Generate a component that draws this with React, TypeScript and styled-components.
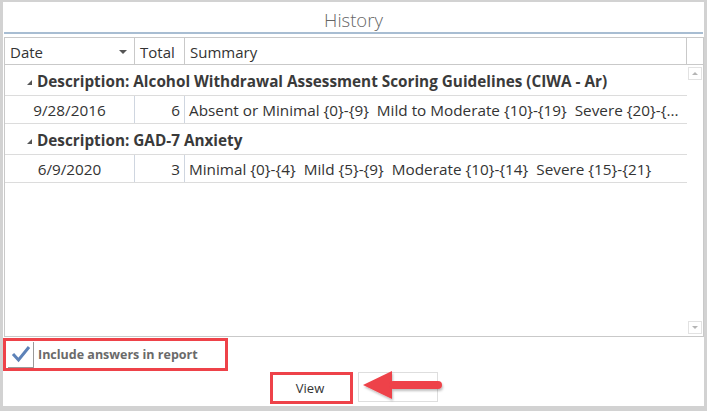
import React from 'react'
import styled, { createGlobalStyle } from 'styled-components'

const colors = {
  frame: '#d2d2d2',
  text: '#333333',
  muted: '#666666',
  line: '#dcdcdc',
  gridBorder: '#c9c9c9',
  cellDivider: '#cfd6e0',
  titleLine: '#a8bdd2',
  red: '#ee4249',
}

const GlobalStyle = createGlobalStyle`
  html, body {
    margin: 0;
    padding: 0;
    background: #ffffff;
  }
  body {
    width: 707px;
    height: 411px;
    overflow: hidden;
    font-family: "Open Sans", "Noto Sans", sans-serif;
    color: ${colors.text};
  }
  * { box-sizing: border-box; }
`

const Window = styled.div`
  width: 707px;
  height: 411px;
  border: 3px solid ${colors.frame};
  border-top-width: 2px;
  border-bottom-width: 5px;
  border-right-width: 3px;
  background: #fff;
  display: flex;
  flex-direction: column;
  padding: 0 0 0 1px;
`

const Title = styled.div`
  height: 32px;
  margin-right: 1px;
  border-bottom: 2px solid ${colors.titleLine};
  text-align: center;
  font-size: 18.5px;
  font-weight: 300;
  color: ${colors.muted};
  line-height: 36px;
`

const Grid = styled.div`
  margin-top: 3px;
  height: 300px;
  border: 1px solid ${colors.gridBorder};
  display: flex;
  flex-direction: column;
`

const HeaderRow = styled.div`
  display: grid;
  grid-template-columns: 130px 50px 1fr 16px;
  height: 27px;
  border-bottom: 1px solid ${colors.gridBorder};
`

const HeaderCell = styled.div<{ $last?: boolean }>`
  display: flex;
  align-items: center;
  justify-content: space-between;
  padding: 2px 5px 0 5px;
  font-size: 15px;
  color: ${colors.text};
  border-right: ${(p) => (p.$last ? 'none' : `1px solid ${colors.gridBorder}`)};
`

const SortArrow = styled.span`
  width: 0;
  height: 0;
  border-left: 4px solid transparent;
  border-right: 4px solid transparent;
  border-top: 4px solid #555;
  margin-right: 2px;
`

const Body = styled.div`
  flex: 1;
  display: flex;
`

const Rows = styled.div`
  flex: 1;
`

const GroupRow = styled.div`
  height: 31px;
  display: flex;
  align-items: center;
  padding: 1px 0 0 22px;
  gap: 5px;
  border-bottom: 1px solid ${colors.line};
  font-size: 15.3px;
  font-weight: 700;
  color: #3a3a3a;
  white-space: nowrap;
`

const Expander = styled.span`
  width: 0;
  height: 0;
  border-left: 5px solid transparent;
  border-bottom: 5px solid #555;
  margin-top: 4px;
`

const DataRow = styled.div`
  display: grid;
  grid-template-columns: 130px 50px 1fr;
  height: 28px;
  border-bottom: 1px solid ${colors.line};
  font-size: 15.3px;
`

const Cell = styled.div<{ $align: 'left' | 'center' | 'right'; $divider?: boolean }>`
  display: flex;
  align-items: center;
  justify-content: ${(p) =>
    p.$align === 'center' ? 'center' : p.$align === 'right' ? 'flex-end' : 'flex-start'};
  padding: 0 4px 0 4px;
  white-space: pre;
  overflow: hidden;
  border-right: ${(p) => (p.$divider ? `1px solid ${colors.cellDivider}` : 'none')};
`

const ScrollBar = styled.div`
  width: 16px;
  display: flex;
  flex-direction: column;
  justify-content: space-between;
  padding: 2px 1px 2px 1px;
`

const ScrollButton = styled.div<{ $down?: boolean }>`
  width: 14px;
  height: 13px;
  border: 1px solid #e2e2e2;
  display: flex;
  align-items: center;
  justify-content: center;
  &::after {
    content: '';
    width: 0;
    height: 0;
    border-left: 3px solid transparent;
    border-right: 3px solid transparent;
    ${(p) => (p.$down ? 'border-top: 3px solid #b5b5b5;' : 'border-bottom: 3px solid #b5b5b5;')}
  }
`

const OptionRow = styled.div`
  margin-top: 1px;
  display: flex;
`

const Highlight = styled.div`
  display: flex;
  align-items: center;
  gap: 4px;
  height: 33px;
  width: 225px;
  border: 3px solid ${colors.red};
  padding-left: 2px;
  margin-left: -1px;
`

const CheckBox = styled.div`
  width: 26px;
  height: 26px;
  border-right: 1px solid #9a9a9a;
  border-bottom: 1px solid #9a9a9a;
  display: flex;
  align-items: center;
  justify-content: center;
`

const OptionLabel = styled.span`
  font-size: 12.5px;
  font-weight: 700;
  color: #6a6a6a;
`

const ButtonRow = styled.div`
  position: relative;
  display: flex;
  justify-content: center;
  gap: 5px;
  padding-top: 1px;
`

const Button = styled.div<{ $marked?: boolean }>`
  width: ${(p) => (p.$marked ? '83px' : '80px')};
  height: ${(p) => (p.$marked ? '32px' : '30px')};
  border: ${(p) => (p.$marked ? `3px solid ${colors.red}` : '1px solid #dedede')};
  display: flex;
  align-items: center;
  justify-content: center;
  padding-right: 3px;
  font-size: 13px;
  color: ${colors.text};
  background: #fff;
`

const Arrow = styled.svg`
  position: absolute;
  left: 355px;
  top: -1px;
  overflow: visible;
`

const groups = [
  {
    title: 'Description: Alcohol Withdrawal Assessment Scoring Guidelines (CIWA - Ar)',
    date: '9/28/2016',
    total: '6',
    summary: 'Absent or Minimal {0}-{9}  Mild to Moderate {10}-{19}  Severe {20}-{...',
  },
  {
    title: 'Description: GAD-7 Anxiety',
    date: '6/9/2020',
    total: '3',
    summary: 'Minimal {0}-{4}  Mild {5}-{9}  Moderate {10}-{14}  Severe {15}-{21}',
  },
]

export default function App() {
  return (
    <>
      <GlobalStyle />
      <Window>
        <Title>History</Title>
        <Grid>
          <HeaderRow>
            <HeaderCell>
              Date
              <SortArrow />
            </HeaderCell>
            <HeaderCell>Total</HeaderCell>
            <HeaderCell>Summary</HeaderCell>
            <HeaderCell $last />
          </HeaderRow>
          <Body>
            <Rows>
              {groups.map((g) => (
                <React.Fragment key={g.title}>
                  <GroupRow>
                    <Expander />
                    {g.title}
                  </GroupRow>
                  <DataRow>
                    <Cell $align="center" $divider>
                      {g.date}
                    </Cell>
                    <Cell $align="right" $divider>
                      {g.total}
                    </Cell>
                    <Cell $align="left">{g.summary}</Cell>
                  </DataRow>
                </React.Fragment>
              ))}
            </Rows>
            <ScrollBar>
              <ScrollButton />
              <ScrollButton $down />
            </ScrollBar>
          </Body>
        </Grid>
        <OptionRow>
          <Highlight>
            <CheckBox>
              <svg width="22" height="20" viewBox="0 0 22 20">
                <path d="M3 10 L8.5 16 L19 3" fill="none" stroke="#5d82b8" strokeWidth="3" />
              </svg>
            </CheckBox>
            <OptionLabel>Include answers in report</OptionLabel>
          </Highlight>
        </OptionRow>
        <ButtonRow>
          <Button $marked>View</Button>
          <Button />
          <Arrow width="86" height="34" viewBox="0 0 86 34">
            <defs>
              <filter id="sh" x="-20%" y="-20%" width="140%" height="160%">
                <feDropShadow dx="1" dy="2" stdDeviation="1" floodColor="#000" floodOpacity="0.25" />
              </filter>
            </defs>
            <g filter="url(#sh)" fill={colors.red}>
              <path d="M4 15 L33 1 L33 29 Z" />
              <rect x="30" y="11" width="53" height="8" rx="4" />
            </g>
          </Arrow>
        </ButtonRow>
      </Window>
    </>
  )
}
